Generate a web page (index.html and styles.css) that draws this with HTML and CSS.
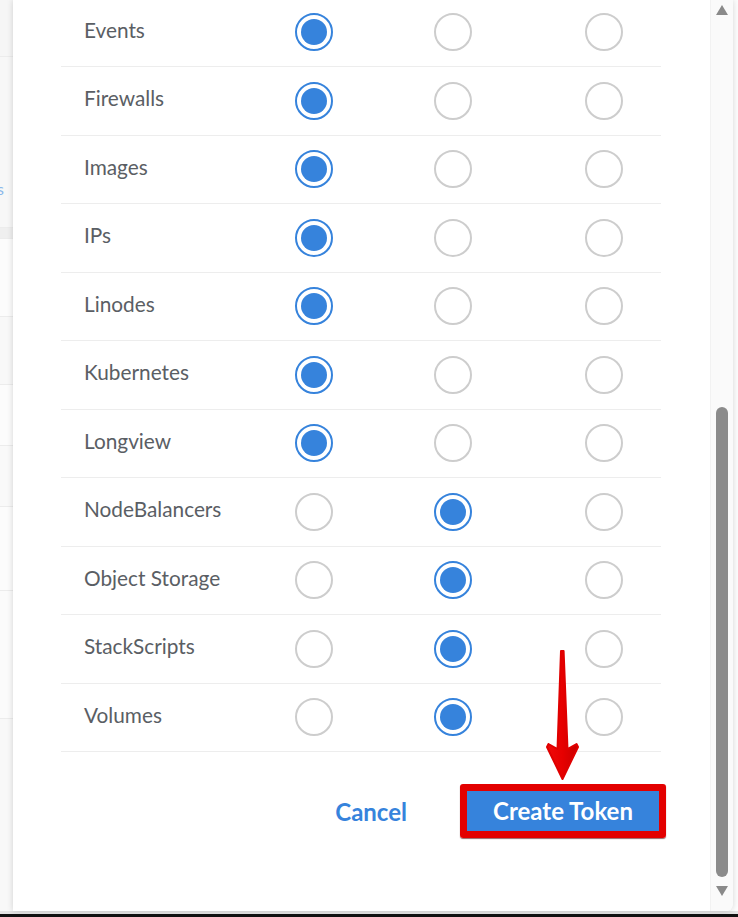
FILE: index.html
```html
<!DOCTYPE html>
<html lang="en">
<head>
<meta charset="utf-8">
<title>Create Personal Access Token</title>
<link rel="stylesheet" href="styles.css">
</head>
<body>
<div class="page">
  <div class="stage">
    <div class="behind">
      <div class="bg-block b1"></div>
      <div class="bg-block b2"><span class="peek">s</span></div>
      <div class="bg-block b3"></div>
      <div class="bg-block b4"></div>
      <div class="bg-block b5"></div>
      <div class="bg-block b6"></div>
      <div class="bg-block b7"></div>
      <div class="bg-block b8"></div>
      <div class="bg-block b9"></div>
    </div>
    <div class="dialog">
      <div class="content">
        <div class="scopes">
          <div class="row"><span class="label">Events</span><span class="cell"><i class="radio on"></i></span><span class="cell"><i class="radio"></i></span><span class="cell"><i class="radio"></i></span></div>
          <div class="row"><span class="label">Firewalls</span><span class="cell"><i class="radio on"></i></span><span class="cell"><i class="radio"></i></span><span class="cell"><i class="radio"></i></span></div>
          <div class="row"><span class="label">Images</span><span class="cell"><i class="radio on"></i></span><span class="cell"><i class="radio"></i></span><span class="cell"><i class="radio"></i></span></div>
          <div class="row"><span class="label">IPs</span><span class="cell"><i class="radio on"></i></span><span class="cell"><i class="radio"></i></span><span class="cell"><i class="radio"></i></span></div>
          <div class="row"><span class="label">Linodes</span><span class="cell"><i class="radio on"></i></span><span class="cell"><i class="radio"></i></span><span class="cell"><i class="radio"></i></span></div>
          <div class="row"><span class="label">Kubernetes</span><span class="cell"><i class="radio on"></i></span><span class="cell"><i class="radio"></i></span><span class="cell"><i class="radio"></i></span></div>
          <div class="row"><span class="label">Longview</span><span class="cell"><i class="radio on"></i></span><span class="cell"><i class="radio"></i></span><span class="cell"><i class="radio"></i></span></div>
          <div class="row"><span class="label">NodeBalancers</span><span class="cell"><i class="radio"></i></span><span class="cell"><i class="radio on"></i></span><span class="cell"><i class="radio"></i></span></div>
          <div class="row"><span class="label">Object Storage</span><span class="cell"><i class="radio"></i></span><span class="cell"><i class="radio on"></i></span><span class="cell"><i class="radio"></i></span></div>
          <div class="row"><span class="label">StackScripts</span><span class="cell"><i class="radio"></i></span><span class="cell"><i class="radio on"></i></span><span class="cell"><i class="radio"></i></span></div>
          <div class="row"><span class="label">Volumes</span><span class="cell"><i class="radio"></i></span><span class="cell"><i class="radio on"></i></span><span class="cell"><i class="radio"></i></span></div>
        </div>
        <div class="actions">
          <button class="btn-cancel" type="button">Cancel</button>
          <span class="highlight"><button class="btn-primary" type="button">Create Token</button></span>
        </div>
        <svg class="arrow" width="50" height="140" viewBox="0 0 50 140" aria-hidden="true">
          <defs>
            <linearGradient id="ag" x1="0" x2="1" y1="0" y2="0">
              <stop offset="0" stop-color="#f00a0a"/>
              <stop offset="0.5" stop-color="#e60000"/>
              <stop offset="1" stop-color="#c80000"/>
            </linearGradient>
          </defs>
          <path d="M21 5 L23.6 5 L27.5 103 L36.5 98 L38 101 L22.5 133 L7 101 L8.5 98 L17.5 103 Z" fill="url(#ag)" stroke="#e00000" stroke-width="2" stroke-linejoin="round"/>
        </svg>
      </div>
      <div class="scrollbar">
        <span class="sb-up"></span>
        <span class="sb-thumb"></span>
        <span class="sb-down"></span>
      </div>
    </div>
    <div class="right-edge"></div>
  </div>
  <div class="bottom-gray"></div>
  <div class="bottom-black"></div>
</div>
</body>
</html>
```

FILE: styles.css
```css
html, body {
  margin: 0;
  padding: 0;
  background: #ffffff;
}

body {
  font-family: Lato, "Open Sans", "Liberation Sans", sans-serif;
  overflow: hidden;
}

.page {
  width: 738px;
  height: 917px;
  display: flex;
  flex-direction: column;
  overflow: hidden;
}

.stage {
  display: flex;
  height: 911px;
  flex: none;
}

.behind {
  width: 13px;
  flex: none;
  display: flex;
  flex-direction: column;
  background: #f8f8f8;
}

.bg-block {
  flex: none;
  border-bottom: 1px solid #ececec;
}

.b1 { height: 56px; background: #f6f6f6; }
.b2 { height: 170px; background: #f7f7f7; position: relative; }
.b3 { height: 10px; background: #efefef; }
.b4 { height: 77px; background: #fcfcfc; }
.b5 { height: 67px; background: #f8f8f8; }
.b6 { height: 60px; background: #fcfcfc; }
.b7 { height: 60px; background: #f9f9f9; }
.b8 { height: 83px; background: #fcfcfc; }
.b9 { height: 127px; background: #fbfbfb; }

.peek {
  position: absolute;
  left: -3px;
  top: 124px;
  font-size: 16px;
  color: #8ab8ea;
  line-height: 1;
}

.dialog {
  width: 719px;
  flex: none;
  display: flex;
  background: #ffffff;
  border-bottom-right-radius: 6px;
  border-right: 1px solid #e2e2e2;
  box-shadow: 0 0 6px rgba(0, 0, 0, 0.16);
  position: relative;
  z-index: 1;
}

.content {
  width: 697px;
  flex: none;
  padding-left: 48px;
  box-sizing: border-box;
  margin-top: -1.5px;
  position: relative;
}

.scopes {
  width: 600px;
}

.row {
  display: grid;
  grid-template-columns: 234px 139px 151px 1fr;
  align-items: center;
  height: 68.5px;
  box-sizing: border-box;
  border-bottom: 1px solid #ededed;
}

.label {
  padding-left: 23px;
  font-size: 20.8px;
  color: #5a5e64;
  line-height: 1;
  padding-bottom: 4px;
}

.cell {
  display: flex;
  align-items: center;
}

.radio {
  display: block;
  width: 38px;
  height: 38px;
  box-sizing: border-box;
  border-radius: 50%;
  border: 2px solid #cdcdcd;
  position: relative;
}

.radio.on {
  border-color: #3683dc;
}

.radio.on::after {
  content: "";
  position: absolute;
  inset: 4px;
  border-radius: 50%;
  background: #3683dc;
}

.actions {
  width: 605px;
  display: flex;
  justify-content: flex-end;
  align-items: center;
  padding-top: 32px;
}

.btn-cancel {
  font-family: inherit;
  font-weight: 700;
  font-size: 24px;
  color: #3683dc;
  background: none;
  border: 0;
  padding: 0;
  margin-right: 53px;
  cursor: pointer;
}

.highlight {
  display: block;
  border: 7px solid #e30000;
  border-radius: 3px;
  box-shadow: 0 1px 1px rgba(80, 0, 0, 0.6);
}

.btn-primary {
  display: block;
  font-family: inherit;
  font-weight: 700;
  font-size: 24px;
  color: #ffffff;
  background: #3683dc;
  border: 0;
  padding: 0 0 2px;
  width: 192px;
  height: 40px;
  cursor: pointer;
}

.arrow {
  position: absolute;
  left: 527px;
  top: 647px;
}

.scrollbar {
  width: 22px;
  flex: none;
  background: #fafafa;
  border-left: 1px solid #f2f2f2;
  display: flex;
  flex-direction: column;
  align-items: center;
  border-bottom-right-radius: 6px;
}

.sb-up {
  margin-top: 5px;
  width: 0;
  height: 0;
  border-left: 6.5px solid transparent;
  border-right: 6.5px solid transparent;
  border-bottom: 10px solid #8a8a8a;
}

.sb-thumb {
  margin-top: 392px;
  width: 12px;
  height: 470px;
  border-radius: 6px;
  background: #8b8b8b;
}

.sb-down {
  margin-top: 9px;
  width: 0;
  height: 0;
  border-left: 6.5px solid transparent;
  border-right: 6.5px solid transparent;
  border-top: 10px solid #8a8a8a;
}

.right-edge {
  flex: 1;
  background: #fdfdfd;
}

.bottom-gray {
  height: 3px;
  background: #e4e4e4;
  flex: none;
}

.bottom-black {
  height: 3px;
  background: #111111;
  flex: none;
}
```
